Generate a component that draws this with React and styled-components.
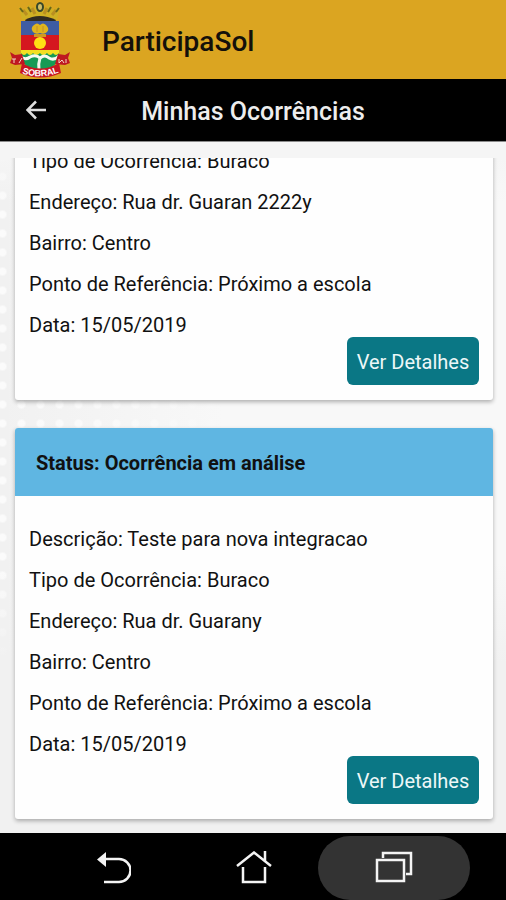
import React from "react";
import styled, { createGlobalStyle } from "styled-components";

const GlobalStyle = createGlobalStyle`
  *, *::before, *::after { box-sizing: border-box; }
  body { margin: 0; font-family: Roboto, "Liberation Sans", sans-serif; color: #111; background: #f6f6f6; }
  button { font: inherit; border: 0; padding: 0; cursor: pointer; }
`;

const Screen = styled.div`
  display: flex;
  flex-direction: column;
  height: 100vh;
  overflow: hidden;
`;

const BrandBar = styled.header`
  flex: none;
  display: flex;
  align-items: center;
  gap: 32px;
  height: 79px;
  padding: 0 8px;
  background: #dba521;
`;

const BrandName = styled.span`
  font-size: 28px;
  line-height: 32px;
  font-weight: 500;
  padding-top: 4px;
  color: #14100a;
`;

const TitleBar = styled.div`
  flex: none;
  display: grid;
  grid-template-columns: 72px 1fr 72px;
  align-items: center;
  height: 62px;
  background: #000;
`;

const BackButton = styled.button`
  display: flex;
  align-items: center;
  justify-content: center;
  height: 100%;
  background: none;
  color: #dedede;
`;

const PageTitle = styled.h1`
  margin: 0;
  padding-top: 4px;
  font-size: 25px;
  line-height: 32px;
  font-weight: 500;
  text-align: center;
  white-space: nowrap;
  color: #ededed;
`;

const Content = styled.main`
  flex: 1;
  min-height: 0;
  display: flex;
  padding-top: 16px;
  border-top: 1px solid #8b8b8b;
  background:
    linear-gradient(180deg, #f5f5f5 16px, rgba(245, 245, 245, 0) 60px, rgba(240, 240, 240, 0) 420px, #f1f1f1 520px),
    linear-gradient(90deg, rgba(247, 247, 247, 0) 0, #f8f8f8 44%),
    radial-gradient(circle, #fbfbfb 3px, rgba(251, 251, 251, 0) 5px) 12px 6px / 19px 19px,
    #f1f1f1;
`;

const CardList = styled.div`
  flex: 1;
  min-width: 0;
  display: flex;
  flex-direction: column;
  justify-content: flex-end;
  gap: 28px;
  padding: 0 13px 14px 15px;
  overflow: hidden;
`;

const Card = styled.article`
  flex: none;
  background: #fefefe;
  border-radius: 3px;
  box-shadow: 0 2px 4px rgba(0, 0, 0, 0.3);
`;

const StatusHeader = styled.h2`
  margin: 0;
  padding: 23px 21px 21px;
  font-size: 20px;
  line-height: 24px;
  font-weight: 700;
  background: #5fb6e2;
  border-radius: 3px 3px 0 0;
`;

const CardBody = styled.div`
  display: flex;
  flex-direction: column;
  padding: 31px 14px 15px;
`;

const Fields = styled.div`
  display: flex;
  flex-direction: column;
  gap: 17px;
`;

const Field = styled.p`
  margin: 0;
  font-size: 20px;
  line-height: 24px;
`;

const DetailsButton = styled.button`
  align-self: flex-end;
  height: 48px;
  width: 132px;
  border-radius: 6px;
  font-size: 20px;
  line-height: 24px;
  padding-top: 2px;
  white-space: nowrap;
  color: #edf7f8;
  background: #0a7785;
`;

const SystemNav = styled.nav`
  flex: none;
  display: grid;
  grid-template-columns: repeat(3, minmax(0, 140px));
  justify-content: center;
  height: 67px;
  padding: 3px 0 0 2px;
  background: #000;
`;

const NavButton = styled.button`
  display: flex;
  align-items: center;
  justify-content: center;
  justify-self: center;
  width: 152px;
  height: 64px;
  border-radius: 32px;
  color: #f4f4f4;
  background: ${(p) => (p.$active ? "#333" : "transparent")};
`;

function Crest() {
  return (
    <svg width="62" height="76" viewBox="0 0 62 76" role="img" aria-label="Sobral">
      <path d="M14 18L11 5L18 8L21 3L26 7L31 1L36 7L42 3L45 8L52 4L49 18Q31 12 14 18Z" fill="#cfb023" />
      <path d="M15 8l4 5M24 6l3 6M39 6l-3 6M48 8l-4 5" stroke="#b98f20" strokeWidth="3" fill="none" />
      <path d="M12 6l3 4M20 5l3 5M43 5l-3 5M51 6l-3 4" stroke="#69651a" strokeWidth="2" fill="none" />
      <ellipse cx="32" cy="5" rx="3" ry="4" fill="#d0bd68" stroke="#38472a" strokeWidth="2" />
      <path d="M17 18Q31 10 48 18L47 20H18Z" fill="#302c20" />
      <path d="M13 19H51V48H13Z" fill="#d5171f" />
      <path d="M13 19H51V33H13Z" fill="#3e5ca3" />
      <path d="M26 23q3-3 6 0q3-3 6 0q4 4 1 7q-3 3-7 1q-4 2-7-1q-3-4 1-7Z" fill="#dfb51d" />
      <path d="M29 24v6M35 24v6" stroke="#c1902a" />
      <rect x="26" y="32" width="12" height="3" fill="#d09a20" />
      <circle cx="32" cy="41" r="6" fill="#ffdf14" />
      <path d="M13 49H51V55Q49 66 32 69Q15 66 13 55Z" fill="#159a55" />
      <path d="M13 48H51V51q-3 4-6 0q-3 4-6 0q-4 4-7 0q-4 4-7 0q-3 4-6 0q-3 4-6 0Z" fill="#f4df22" />
      <path d="M12 54q5 5 10 1q6-3 10 1q5-4 9 0q5 3 10-2" fill="none" stroke="#f8faf3" strokeWidth="3" />
      <path d="M32 56q-2 6-1 12" stroke="#eef5e9" strokeWidth="3" fill="none" />
      <path d="M2 50l5 3 7-1 3 10-10 1-5-2 2-5ZM62 50l-5 3-7-1-3 10 10 1 5-2-2-5Z" fill="#be1721" />
      <path d="M4 57h4M6 57v4M11 61l3-5M51 57v4l3-3 2 3M58 57v4" stroke="#f3d6c6" fill="none" />
      <path d="M14 61Q32 72 51 61L53 71Q32 80 12 71Z" fill="#c81522" />
      <path id="crest-ribbon" d="M13 71Q32 78 52 70" fill="none" />
      <text fontFamily="Liberation Sans, sans-serif" fontSize="9" fontWeight="700" fill="#fff" textAnchor="middle">
        <textPath href="#crest-ribbon" startOffset="50%">SOBRAL</textPath>
      </text>
    </svg>
  );
}

function ArrowIcon() {
  return (
    <svg width="20" height="20" viewBox="0 0 20 20" fill="none" stroke="currentColor" strokeWidth="2.500" aria-hidden="true">
      <path d="M20 10H2M10 1.500L1.500 10L10 18.500" />
    </svg>
  );
}

function NavBackIcon() {
  return (
    <svg width="34" height="34" viewBox="0 0 34 34" aria-hidden="true">
      <path d="M8 8H22a11.500 11.500 0 0 1 0 23H7" fill="none" stroke="currentColor" strokeWidth="2.500" />
      <path d="M0 8.500L9 1V16Z" fill="currentColor" />
    </svg>
  );
}

function HomeIcon() {
  return (
    <svg width="36" height="34" viewBox="0 0 36 34" fill="none" stroke="currentColor" strokeWidth="2.500" aria-hidden="true">
      <path d="M1 15L18 1.500L35 15M29 10V0M7 16V31H29V16" />
    </svg>
  );
}

function RecentsIcon() {
  return (
    <svg width="38" height="34" viewBox="0 0 38 34" fill="none" stroke="currentColor" strokeWidth="2.500" aria-hidden="true">
      <path d="M2 9H29V30H2ZM8 7V2H36V23H31" />
    </svg>
  );
}

const occurrences = [
  {
    id: 1,
    fields: [
      ["Tipo de Ocorrência", "Buraco"],
      ["Endereço", "Rua dr. Guaran 2222y"],
      ["Bairro", "Centro"],
      ["Ponto de Referência", "Próximo a escola"],
      ["Data", "15/05/2019"],
    ],
  },
  {
    id: 2,
    status: "Ocorrência em análise",
    fields: [
      ["Descrição", "Teste para nova integracao"],
      ["Tipo de Ocorrência", "Buraco"],
      ["Endereço", "Rua dr. Guarany"],
      ["Bairro", "Centro"],
      ["Ponto de Referência", "Próximo a escola"],
      ["Data", "15/05/2019"],
    ],
  },
];

function OccurrenceCard({ status, fields }) {
  return (
    <Card>
      {status && <StatusHeader>Status: {status}</StatusHeader>}
      <CardBody>
        <Fields>
          {fields.map(([label, value]) => (
            <Field key={label}>{label}: {value}</Field>
          ))}
        </Fields>
        <DetailsButton type="button">Ver Detalhes</DetailsButton>
      </CardBody>
    </Card>
  );
}

export default function App() {
  return (
    <Screen>
      <GlobalStyle />
      <BrandBar>
        <Crest />
        <BrandName>ParticipaSol</BrandName>
      </BrandBar>
      <TitleBar>
        <BackButton type="button" aria-label="Voltar"><ArrowIcon /></BackButton>
        <PageTitle>Minhas Ocorrências</PageTitle>
      </TitleBar>
      <Content>
        <CardList>
          {occurrences.map((item) => (
            <OccurrenceCard key={item.id} status={item.status} fields={item.fields} />
          ))}
        </CardList>
      </Content>
      <SystemNav>
        <NavButton type="button" aria-label="Voltar"><NavBackIcon /></NavButton>
        <NavButton type="button" aria-label="Início"><HomeIcon /></NavButton>
        <NavButton type="button" aria-label="Recentes" $active><RecentsIcon /></NavButton>
      </SystemNav>
    </Screen>
  );
}
